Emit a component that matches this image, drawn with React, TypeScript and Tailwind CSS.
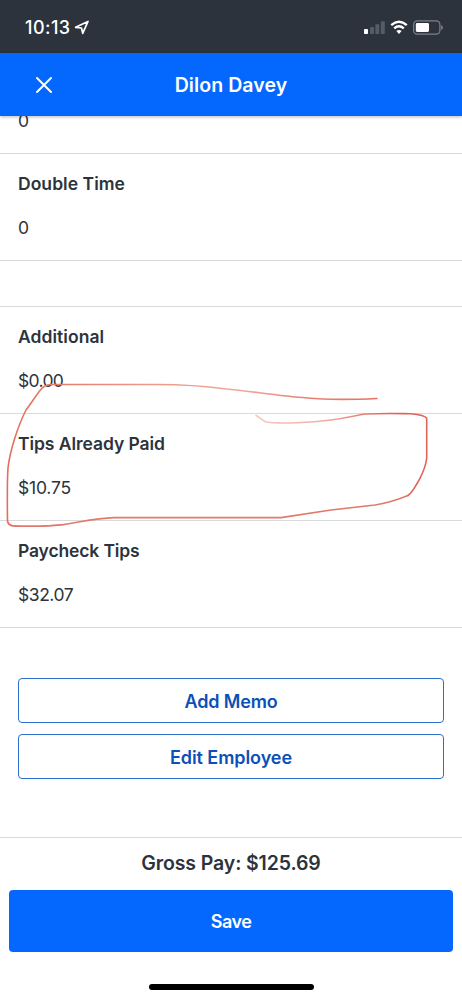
import React from "react";

type RowProps = { label: string; value: string; labelClass: string; valueClass: string };

function Row({ label, value, labelClass, valueClass }: RowProps) {
  return (
    <section className="flex h-[107px] flex-col border-b border-[#d8dadc] pl-[18px] pt-[18px]">
      <h2 className={`h-6 whitespace-nowrap text-[17.5px] font-semibold leading-6 ${labelClass}`}>{label}</h2>
      <p className={`mt-5 h-6 whitespace-nowrap text-[17.5px] leading-6 ${valueClass}`}>{value}</p>
    </section>
  );
}

function StatusBar() {
  return (
    <div className="flex h-[53px] shrink-0 items-start bg-[#2c333c] pl-[25px] pr-[19px] text-white">
      <span className="mt-4 w-[45px] whitespace-nowrap text-[18px] font-medium leading-6 tracking-[0.45px]">10:13</span>
      <svg className="ml-[4px] mt-[20px]" width="15" height="15" viewBox="0 0 15 15" fill="none">
        <path d="M14 1.4 8.7 13.4 7.5 8 1.6 7.3Z" stroke="white" strokeWidth="1.7" strokeLinejoin="round" />
      </svg>
      <svg className="ml-auto mt-[19px]" width="80" height="17" viewBox="0 0 80 17" fill="none">
        <rect x="1" y="10" width="4" height="5" rx="0.8" fill="white" />
        <rect x="7" y="8" width="4" height="7" rx="0.8" fill="#565c64" />
        <rect x="12.3" y="5.2" width="4" height="9.8" rx="0.8" fill="#565c64" />
        <rect x="17.8" y="2.2" width="4" height="12.8" rx="0.8" fill="#565c64" />
        <path d="M28.2 6.1Q36 -0.6 43.8 6.1M31.2 9.3Q36 5.1 40.8 9.3" stroke="white" strokeWidth="2.4" />
        <path d="M33.4 12.1Q36 9.9 38.6 12.1L36 14.9Z" fill="white" />
        <rect x="50.6" y="1.8" width="26.3" height="13.3" rx="3.6" stroke="#7d8288" strokeWidth="1.2" />
        <rect x="52.8" y="4" width="13.2" height="9" rx="1.4" fill="white" />
        <path d="M78.2 6v5Q80 10 80 8.5T78.2 6Z" fill="#7d8288" />
      </svg>
    </div>
  );
}

function TitleBar() {
  return (
    <header className="relative z-10 grid h-[63px] shrink-0 grid-cols-[87px_1fr_87px] items-center bg-[#0468ff] text-white shadow-[0_1px_3px_rgba(0,0,0,0.28)]">
      <button aria-label="Close" className="flex justify-center">
        <svg width="18" height="18" viewBox="0 0 18 18" fill="none" stroke="white" strokeWidth="2" strokeLinecap="round">
          <path d="M2 2 16 16M16 2 2 16" />
        </svg>
      </button>
      <h1 className="text-center text-[19.5px] font-semibold leading-6 tracking-[0.08px]">Dilon Davey</h1>
    </header>
  );
}

function Annotation() {
  return (
    <svg className="pointer-events-none absolute left-0 top-[370px]" width="462" height="170" viewBox="0 370 462 170" fill="none" strokeLinecap="round" strokeLinejoin="round">
      <defs>
        <linearGradient id="upper" gradientUnits="userSpaceOnUse" x1="0" y1="0" x2="377" y2="0">
          <stop offset="0" stopColor="#e26c5a" />
          <stop offset="0.4" stopColor="#ee9989" />
          <stop offset="0.65" stopColor="#f0a79a" />
          <stop offset="0.8" stopColor="#e78375" />
          <stop offset="1" stopColor="#e57262" />
        </linearGradient>
        <linearGradient id="right" gradientUnits="userSpaceOnUse" x1="256" y1="0" x2="390" y2="0">
          <stop offset="0" stopColor="#f5c7bd" />
          <stop offset="0.5" stopColor="#f0afa4" />
          <stop offset="1" stopColor="#df6459" />
        </linearGradient>
      </defs>
      <path d="M377 398.5C355 399.5 328 400 307 398C279 396 249 391 226 389C204 386 181 384.5 157 384.5H51C46 384.5 43 386.5 40 390.5C34 398 31 404 26 410C18 426 10 450 8 468C7 482 7.3 505 7.5 521C8 524 10 525.8 14 526C28 526.5 49 526.5 64 524.5" stroke="url(#upper)" strokeWidth="1.6" />
      <path d="M14 526C28 526.5 49 526.5 64 524.5C83 521.5 98 518 114 517.6H281L331 510L375 505C389 502.8 397 500 408 495.5" stroke="#e2796a" strokeWidth="1.6" />
      <path d="M256 415.5C259 417 262 420 266 422C281 424 311 422.5 331 420C350 417.5 356 415 366 414C384 413 397 413.5 411 413.7C418 414.4 425 415.5 426.7 418V458C425.5 469 422 474 418 482C413 490 412 493 408 495.5" stroke="url(#right)" strokeWidth="1.6" />
    </svg>
  );
}

export default function App() {
  return (
    <div className="relative flex h-[999px] w-[462px] flex-col overflow-hidden bg-white font-['Inter',sans-serif] text-[#2d333b]">
      <StatusBar />
      <TitleBar />
      <main className="flex h-[721px] shrink-0 flex-col">
        <div className="h-[38px] shrink-0 border-b border-[#d8dadc] pl-[18px]">
          <p className="-mt-[7px] text-[17.5px] leading-6">0</p>
        </div>
        <Row label="Double Time" value="0" labelClass="tracking-[0.04px]" valueClass="" />
        <div className="h-[46px] shrink-0 border-b border-[#d8dadc]" />
        <Row label="Additional" value="$0.00" labelClass="tracking-[0.05px]" valueClass="tracking-[-0.65px]" />
        <Row label="Tips Already Paid" value="$10.75" labelClass="tracking-[-0.06px]" valueClass="tracking-[-0.2px]" />
        <Row label="Paycheck Tips" value="$32.07" labelClass="tracking-[-0.14px]" valueClass="tracking-[-0.45px]" />
        <div className="mt-[50px] flex flex-col gap-[11px] px-[18px]">
          <button className="h-[45px] rounded-[4px] border border-[#2d6fc9] pt-px text-[18px] font-semibold tracking-[-0.15px] text-[#0b50b8]">Add Memo</button>
          <button className="h-[45px] rounded-[4px] border border-[#2d6fc9] pt-px text-[18px] font-semibold tracking-[-0.07px] text-[#0b50b8]">Edit Employee</button>
        </div>
      </main>
      <footer className="flex flex-1 flex-col items-center border-t border-[#d8dadc]">
        <p className="mt-[13px] text-[19.5px] font-semibold leading-6 tracking-[-0.12px]">Gross Pay: $125.69</p>
        <button className="mt-[15px] h-[62px] w-[444px] rounded-[4px] bg-[#0468ff] text-[18px] font-semibold tracking-[-0.5px] text-white">Save</button>
        <div className="mt-[32px] h-[6px] w-[165px] rounded-full bg-black" />
      </footer>
      <Annotation />
    </div>
  );
}
